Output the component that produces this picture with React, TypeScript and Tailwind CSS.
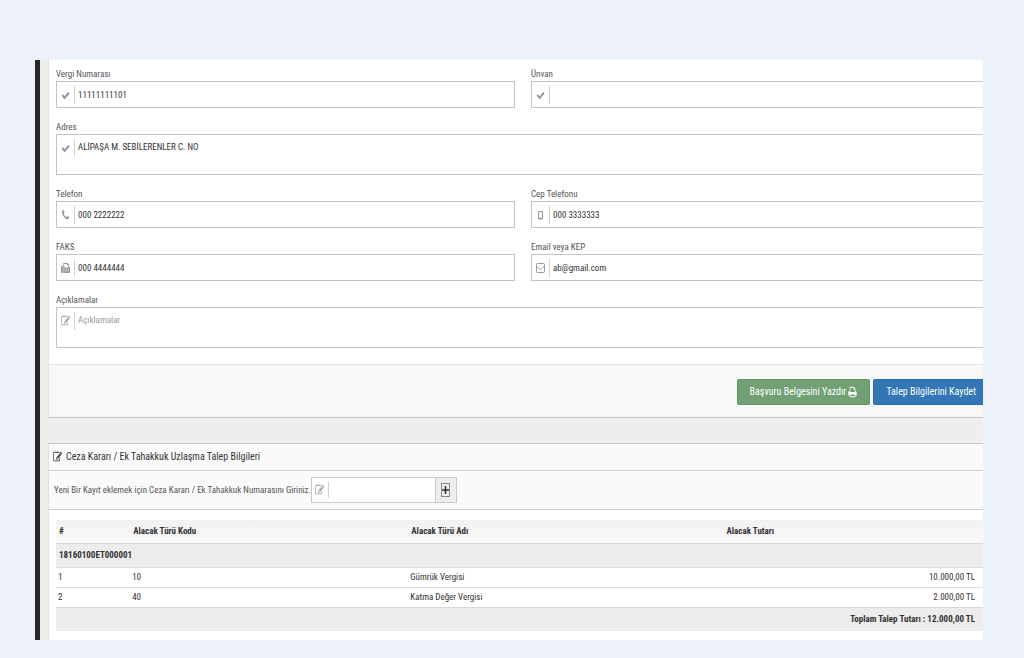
import { useState } from 'react';
import type { ReactNode } from 'react';

type IconProps = { className?: string };

const amounts = [
  { no: '1', code: '10', name: 'Gümrük Vergisi', total: '10.000,00 TL' },
  { no: '2', code: '40', name: 'Katma Değer Vergisi', total: '2.000,00 TL' },
];

export default function App() {
  const [decisionNo, setDecisionNo] = useState('');

  return (
    <div className="min-h-screen bg-[#edf1fa] pt-15 pr-[41px] pb-[18px] pl-[35px] font-['Roboto_Condensed','Liberation_Sans',Arial,sans-serif] text-[9px] leading-4 text-[#333]">
      <div className="overflow-hidden border-l-5 border-[#292727] bg-[#eeeeee] pl-2">
        {/* Applicant form */}
        <form className="border-b border-l border-[#c4c4c4] border-l-[#dfe3e1] bg-white" onSubmit={(e) => e.preventDefault()}>
          <div className="-mr-[7px] grid grid-cols-2 gap-x-4 gap-y-[9px] pt-1 pb-4 pl-[7px]">
            <Field id="vergi" label="Vergi Numarası" value="11111111101" icon={<CheckIcon className="h-[11px] w-[9px]" />} />
            <Field id="unvan" label="Ünvan" value="" icon={<CheckIcon className="h-[11px] w-[9px]" />} />
            <Field id="adres" label="Adres" value="ALİPAŞA M. SEBİLERENLER C. NO" multiline icon={<CheckIcon className="h-[11px] w-[9px]" />} />
            <Field id="telefon" label="Telefon" value="000 2222222" icon={<PhoneIcon className="h-3 w-[9px]" />} />
            <Field id="cep" label="Cep Telefonu" value="000 3333333" icon={<MobileIcon className="h-3 w-[9px]" />} />
            <Field id="faks" label="FAKS" value="000 4444444" icon={<FaxIcon className="h-3 w-[9px]" />} />
            <Field id="email" label="Email veya KEP" value="ab@gmail.com" icon={<MailIcon className="h-3 w-[9px]" />} />
            <Field id="aciklamalar" label="Açıklamalar" value="" placeholder="Açıklamalar" multiline icon={<EditIcon className="h-3 w-[9px]" />} />
          </div>
          <footer className="-mr-[6px] flex justify-end gap-[3px] border-t border-[#e2e2e2] bg-[#f8f8f8] pt-[14px] pb-3">
            <button type="button" className="flex h-[26px] items-center gap-[2px] rounded-xs border border-[#659468] bg-[#71a075] px-3 text-[10px] text-white">
              Başvuru Belgesini Yazdır <PrintIcon className="h-3 w-[9px]" />
            </button>
            <button type="submit" className="h-[26px] rounded-xs border border-[#2b6dab] bg-[#3276b5] px-3 text-[10px] text-white">
              Talep Bilgilerini Kaydet
            </button>
          </footer>
        </form>

        {/* Decision records */}
        <section className="mt-[25px] border-t border-l border-[#c4c4c4] border-l-[#dfe3e1] bg-white">
          <h2 className="flex h-[26px] items-center gap-1 bg-[#fafafa] pl-1 text-[10px] text-[#333]">
            <EditIcon className="h-3 w-[9px]" />
            Ceza Kararı / Ek Tahakkuk Uzlaşma Talep Bilgileri
          </h2>
          <div className="flex h-10 items-center border-y border-[#d2d2d2] bg-[#fafafa] pl-[5px]">
            <label htmlFor="karar" className="whitespace-nowrap text-[#555]">
              Yeni Bir Kayıt eklemek için Ceza Kararı / Ek Tahakkuk Numarasını Giriniz.
            </label>
            <div className="flex h-[26px] w-[146px] border border-[#c9c9c9] bg-white">
              <span className="my-1 flex w-[17px] shrink-0 items-center justify-center border-r border-[#d0d0d0] text-[#999]">
                <EditIcon className="h-3 w-[9px]" />
              </span>
              <input
                id="karar"
                value={decisionNo}
                onChange={(e) => setDecisionNo(e.target.value)}
                className="min-w-0 flex-1 px-1 outline-none"
              />
              <button type="button" aria-label="Ekle" className="flex w-[21px] items-center justify-center border-l border-[#c9c9c9] bg-[#eeeeee] text-[#333]">
                <PlusIcon className="h-[14px] w-[9px]" />
              </button>
            </div>
          </div>

          <div className="pt-[10px] pb-[9px] pl-[7px]">
            <table className="w-full table-fixed border-collapse">
              <thead>
                <tr className="h-[23px] bg-linear-to-b from-[#f1f1f1] to-[#fafafa] text-left">
                  <th className="w-[8%] pl-[3px]">#</th>
                  <th className="w-[30%] pl-[3px]">Alacak Türü Kodu</th>
                  <th className="w-[34%] pl-[3px]">Alacak Türü Adı</th>
                  <th className="pl-[3px]">Alacak Tutarı</th>
                </tr>
              </thead>
              <tbody>
                <tr className="h-6 border-t border-[#d8d8d8] bg-[#ececec] text-left">
                  <th colSpan={4} className="pl-[3px]">18160100ET000001</th>
                </tr>
                {amounts.map((row) => (
                  <tr key={row.no} className="h-5 border-t border-[#dddddd]">
                    <td className="pl-[2px]">{row.no}</td>
                    <td className="pl-[2px]">{row.code}</td>
                    <td className="pl-[2px]">{row.name}</td>
                    <td className="pr-2 text-right">{row.total}</td>
                  </tr>
                ))}
              </tbody>
              <tfoot>
                <tr className="h-6 border-t border-[#d8d8d8] bg-[#ececec]">
                  <td colSpan={4} className="pr-2 text-right font-bold">Toplam Talep Tutarı : 12.000,00 TL</td>
                </tr>
              </tfoot>
            </table>
          </div>
        </section>
      </div>
    </div>
  );
}

function Field({ id, label, value, placeholder, multiline, icon }: {
  id: string;
  label: string;
  value: string;
  placeholder?: string;
  multiline?: boolean;
  icon: ReactNode;
}) {
  const control = 'min-w-0 flex-1 resize-none px-[3px] text-[#333] outline-none placeholder:text-[#999]';
  return (
    <div className={multiline ? 'col-span-2' : ''}>
      <label htmlFor={id} className="block h-[17px] leading-5 text-[#555]">{label}</label>
      <div className={`flex border border-[#c4c4c4] bg-white ${multiline ? 'h-[41px]' : 'h-[27px]'}`}>
        <span className="mt-1 flex h-[18px] w-[18px] shrink-0 items-center justify-center border-r border-[#d0d0d0] text-[#999]">
          {icon}
        </span>
        {multiline ? (
          <textarea id={id} defaultValue={value} placeholder={placeholder} className={`${control} pt-1`} />
        ) : (
          <input id={id} defaultValue={value} placeholder={placeholder} className={control} />
        )}
      </div>
    </div>
  );
}

function CheckIcon({ className }: IconProps) {
  return (
    <svg viewBox="0 0 1792 1792" preserveAspectRatio="none" fill="currentColor" className={className}>
      <path d="M1671 566q0 40-28 68l-724 724-136 136q-28 28-68 28t-68-28l-136-136-362-362q-28-28-28-68t28-68l136-136q28-28 68-28t68 28l294 295 656-657q28-28 68-28t68 28l136 136q28 28 28 68z" />
    </svg>
  );
}

function EditIcon({ className }: IconProps) {
  return (
    <svg viewBox="0 0 1792 1792" preserveAspectRatio="none" fill="currentColor" className={className}>
      <path d="M888 1184l116-116-152-152-116 116v56h96v96h56zm440-720q-16-16-33 1l-350 350q-17 17-1 33t33-1l350-350q17-17 1-33zm80 594v190q0 119-84.5 203.5t-203.5 84.5h-832q-119 0-203.5-84.5t-84.5-203.5v-832q0-119 84.5-203.5t203.5-84.5h832q63 0 117 25 15 7 18 23 3 17-9 29l-49 49q-14 14-32 8-23-6-45-6h-832q-66 0-113 47t-47 113v832q0 66 47 113t113 47h832q66 0 113-47t47-113v-126q0-13 9-22l64-64q15-15 35-7t20 29zm-96-738l288 288-672 672h-288v-288zm444 132l-92 92-288-288 92-92q28-28 68-28t68 28l152 152q28 28 28 68t-28 68z" />
    </svg>
  );
}

function PhoneIcon({ className }: IconProps) {
  return (
    <svg viewBox="0 0 1792 1792" preserveAspectRatio="none" fill="currentColor" className={className}>
      <path d="M1600 1240q0 27-10 70.5t-21 68.5q-21 50-122 106-94 51-186 51-27 0-52.5-3.5t-57.5-12.5-47.5-14.5-55.5-20.5-49-18q-98-35-175-83-128-79-264.5-215.5t-215.5-264.5q-48-77-83-175-3-9-18-49t-20.5-55.5-14.5-47.5-12.5-57.5-3.5-52.5q0-92 51-186 56-101 106-122 25-11 68.5-21t70.5-10q14 0 21 3 18 6 53 76 11 19 30 54t35 63.5 31 53.5q3 4 17.5 25t21.5 35.5 7 28.5q0 20-28.5 50t-62 55-62 53-28.5 46q0 9 5 22.5t8.5 20.5 14 24 11.5 19q76 137 174 235t235 174q2 1 19 11.5t24 14 20.5 8.5 22.5 5q18 0 46-28.5t53-62 55-62 50-28.5q14 0 28.5 7t35.5 21.5 25 17.5q25 15 53.5 31t63.5 35 54 30q70 35 76 53 3 7 3 21z" />
    </svg>
  );
}

function MobileIcon({ className }: IconProps) {
  return (
    <svg viewBox="0 0 9 12" className={className}>
      <path fill="currentColor" fillRule="evenodd" d="M3 2h3q1 0 1 1v6.500q0 1-1 1H3q-1 0-1-1V3q0-1 1-1zM3 3.300v5.400h3V3.300z" />
    </svg>
  );
}

function FaxIcon({ className }: IconProps) {
  return (
    <svg viewBox="0 0 9 12" className={className}>
      <path fill="currentColor" fillRule="evenodd" d="M.5 4h1.300v7H.5q-.5 0-.5-.5v-6Q0 4 .5 4zM2.300 1h4.200L8 2.600V4.500q1 .2 1 1v4.700q0 .8-.8.800H2.300zM3.200 2v3.600h4V3.200H6V2zM3.500 6.700v.8h1v-.8zM5.200 6.700v.8h1v-.8zM6.900 6.700v.8h1v-.8zM3.500 8.500v.8h1v-.8zM5.200 8.500v.8h1v-.8zM6.900 8.500v.8h1v-.8z" />
    </svg>
  );
}

function MailIcon({ className }: IconProps) {
  return (
    <svg viewBox="0 0 9 12" fill="none" stroke="currentColor" className={className}>
      <rect x="0.500" y="1.500" width="8" height="9" rx="1" />
      <path d="M.8 4.200 3.700 7.200q.8.700 1.600 0L8.200 4.200" />
    </svg>
  );
}

function PrintIcon({ className }: IconProps) {
  return (
    <svg viewBox="0 0 1792 1792" preserveAspectRatio="none" fill="currentColor" className={className}>
      <path d="M448 1536h896v-256h-896v256zm0-640h896v-384h-160q-40 0-68-28t-28-68v-160h-640v640zm1152 64q0-26-19-45t-45-19-45 19-19 45 19 45 45 19 45-19 19-45zm128 0v416q0 13-9.500 22.500t-22.500 9.500h-224v160q0 40-28 68t-68 28h-960q-40 0-68-28t-28-68v-160h-224q-13 0-22.500-9.500t-9.500-22.500v-416q0-79 56.500-135.500t135.500-56.500h64v-544q0-40 28-68t68-28h672q40 0 88 20t76 48l152 152q28 28 48 76t20 88v256h64q79 0 135.500 56.500t56.500 135.500z" />
    </svg>
  );
}

function PlusIcon({ className }: IconProps) {
  return (
    <svg viewBox="0 0 9 14" className={className}>
      <rect x="0.500" y="0.500" width="8" height="13" fill="none" stroke="#888" />
      <path fill="currentColor" d="M3.700 3h1.600v3.200H8v1.600H5.300V11H3.700V7.800H1V6.200h2.700z" />
    </svg>
  );
}
